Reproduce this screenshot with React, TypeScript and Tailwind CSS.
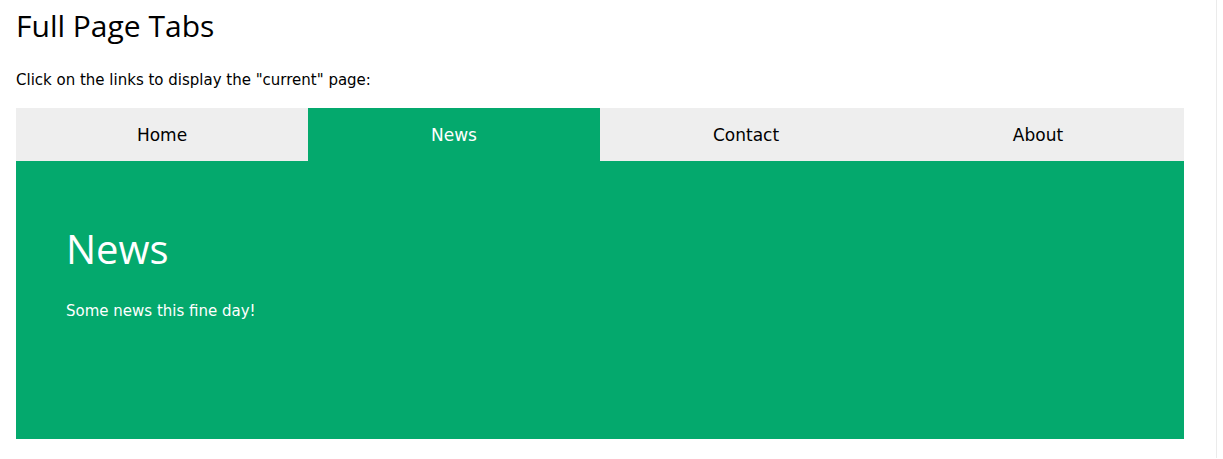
import { useState } from 'react';

type Tab = { key: string; label: string; color: string; title: string; body: string };

const TABS: Tab[] = [
  { key: 'home', label: 'Home', color: 'bg-[#f44336]', title: 'Home', body: 'Home is where the heart is..' },
  { key: 'news', label: 'News', color: 'bg-[#04a96d]', title: 'News', body: 'Some news this fine day!' },
  { key: 'contact', label: 'Contact', color: 'bg-[#2196f3]', title: 'Contact', body: 'Get in touch, or swing by for a cup of coffee.' },
  { key: 'about', label: 'About', color: 'bg-[#ff9800]', title: 'About', body: 'Who we are and what we do.' },
];

const heading = { fontFamily: '"Open Sans", "Noto Sans", sans-serif' };
const body = { fontFamily: '"DejaVu Sans", Verdana, sans-serif' };

export default function App() {
  const [current, setCurrent] = useState('news');
  const tab = TABS.find((t) => t.key === current) ?? TABS[1];

  return (
    <div className="flex min-h-[459px] bg-white text-black" style={body}>
      <main className="w-[1216px] shrink-0 pl-4 pr-8">
        <h1 className="mt-[8px] text-[30px] leading-[36px] font-normal" style={heading}>
          Full Page Tabs
        </h1>
        <p className="mt-[27px] text-[15px] leading-[18px]">Click on the links to display the "current" page:</p>

        <div className="mt-[19px] flex">
          {TABS.map((t) => (
            <button
              key={t.key}
              onClick={() => setCurrent(t.key)}
              className={`flex h-[53px] flex-1 items-center justify-center pt-[3px] text-[17px] ${
                t.key === current ? `${t.color} text-white` : 'bg-[#eeeeee] text-black hover:bg-[#777777] hover:text-white'
              }`}
            >
              {t.label}
            </button>
          ))}
        </div>

        <section className={`h-[278px] pt-[64px] pl-[50px] text-white ${tab.color}`}>
          <h3 className="text-[40px] leading-[48px] font-normal" style={heading}>
            {tab.title}
          </h3>
          <p className="mt-[29px] text-[15px] leading-[18px]">{tab.body}</p>
        </section>
      </main>
      <div className="h-[458px] w-px shrink-0 bg-[#ebebeb]" />
    </div>
  );
}
